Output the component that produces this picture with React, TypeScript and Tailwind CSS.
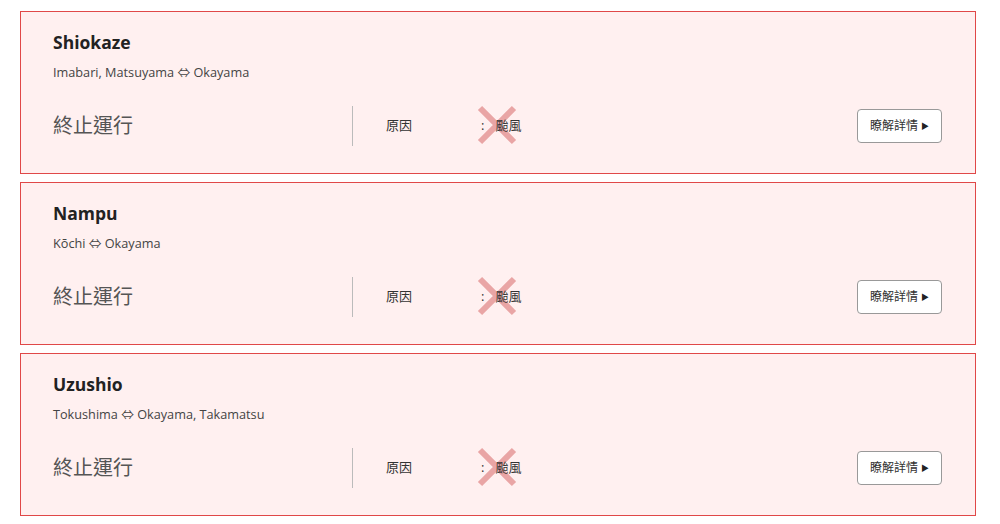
const trains = [
  { name: "Shiokaze", route: "Imabari, Matsuyama ⇔ Okayama" },
  { name: "Nampu", route: "Kōchi ⇔ Okayama" },
  { name: "Uzushio", route: "Tokushima ⇔ Okayama, Takamatsu" },
];

function CrossMark() {
  return (
    <svg className="absolute left-[-4px] top-[-11px]" width="40" height="40" viewBox="0 0 40 40">
      <path d="M3 3 L37 37 M37 3 L3 37" stroke="#e9a5a5" strokeWidth="6" />
    </svg>
  );
}

function TrainCard({ name, route }: { name: string; route: string }) {
  return (
    <div className="border border-[#e04848] bg-[#fff0f0] pl-[32px] pr-[33px] pt-[18px] pb-[27px]">
      <h3 className="text-[17.5px] font-bold text-[#222] leading-[24px]">{name}</h3>
      <p className="mt-[10px] text-[12.7px] text-[#444] leading-[17px]">{route}</p>
      <div className="mt-[25px] flex items-center">
        <div className="w-[299px] text-[20px] text-[#555] leading-[28px]">終止運行</div>
        <div className="h-[40px] w-px bg-[#bbb]" />
        <div className="ml-[33px] w-[95px] text-[13px] text-[#333]">原因</div>
        <div className="relative flex text-[13px] text-[#333]">
          <CrossMark />
          <span className="relative">:</span>
          <span className="relative ml-[11px]">颱風</span>
        </div>
        <button className="ml-auto flex h-[34px] w-[85px] items-center justify-center rounded-[4px] border border-[#999] bg-white text-[12px] text-[#333]">
          瞭解詳情
          <span className="ml-[3px] text-[8px] text-[#222]">▶</span>
        </button>
      </div>
    </div>
  );
}

export default function App() {
  return (
    <div
      className="flex flex-col gap-[8px] bg-white pl-[20px] pr-[24px] pt-[11px]"
      style={{ fontFamily: '"Open Sans", "Noto Sans CJK TC", sans-serif' }}
    >
      {trains.map((t) => (
        <TrainCard key={t.name} {...t} />
      ))}
    </div>
  );
}
